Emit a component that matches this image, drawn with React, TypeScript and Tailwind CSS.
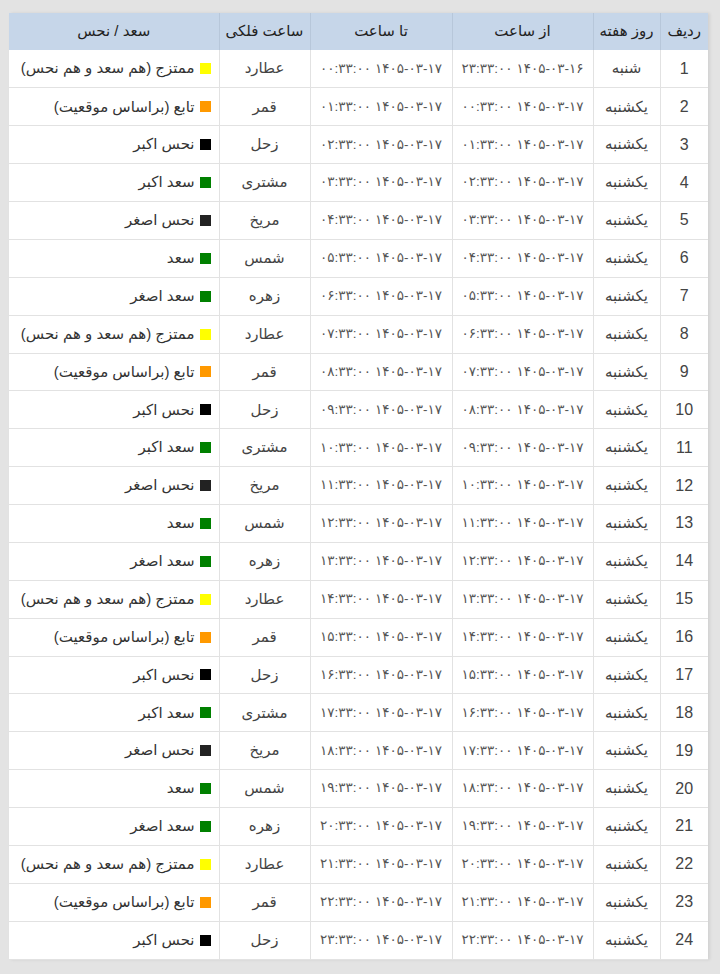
const toFa = (s: string) => s.replace(/[0-9]/g, (d) => "۰۱۲۳۴۵۶۷۸۹"[Number(d)]);

const planets = ["عطارد", "قمر", "زحل", "مشتری", "مریخ", "شمس", "زهره"];

const status: Record<string, { label: string; color: string }> = {
  عطارد: { label: "ممتزج (هم سعد و هم نحس)", color: "bg-[#ffff00]" },
  قمر: { label: "تابع (براساس موقعیت)", color: "bg-[#ff9900]" },
  زحل: { label: "نحس اکبر", color: "bg-[#000000]" },
  مشتری: { label: "سعد اکبر", color: "bg-[#008000]" },
  مریخ: { label: "نحس اصغر", color: "bg-[#222222]" },
  شمس: { label: "سعد", color: "bg-[#008000]" },
  زهره: { label: "سعد اصغر", color: "bg-[#008000]" },
};

const pad = (n: number) => String(n).padStart(2, "0");

const rows = Array.from({ length: 24 }, (_, i) => {
  const from = i === 0 ? "1405-03-16 23:33:00" : `1405-03-17 ${pad(i - 1)}:33:00`;
  const to = `1405-03-17 ${pad(i)}:33:00`;
  return {
    n: i + 1,
    day: i === 0 ? "شنبه" : "یکشنبه",
    from: toFa(from),
    to: toFa(to),
    planet: planets[i % 7],
  };
});

export default function App() {
  return (
    <main
      className="bg-[#e3e3e3] min-h-[974px] pt-[13px] pl-[9px]"
      style={{ fontFamily: '"Liberation Sans", "DejaVu Sans", sans-serif' }}
    >
      <table
        dir="rtl"
        className="w-[699px] table-fixed border-collapse bg-white text-[15px] text-[#333] shadow-[2px_0_3px_rgba(0,0,0,0.08)]"
      >
        <colgroup>
          <col className="w-[48px]" />
          <col className="w-[67px]" />
          <col className="w-[141px]" />
          <col className="w-[142px]" />
          <col className="w-[91px]" />
          <col className="w-[210px]" />
        </colgroup>
        <thead>
          <tr className="h-[37px] bg-[#c6d6e9] text-[15px] text-[#222] whitespace-nowrap">
            <th className="border-l border-[#b7c7da] font-normal">ردیف</th>
            <th className="border-l border-[#b7c7da] font-normal">روز هفته</th>
            <th className="border-l border-[#b7c7da] font-normal">از ساعت</th>
            <th className="border-l border-[#b7c7da] font-normal">تا ساعت</th>
            <th className="border-l border-[#b7c7da] font-normal">ساعت فلکی</th>
            <th className="font-normal">سعد / نحس</th>
          </tr>
        </thead>
        <tbody>
          {rows.map((r) => {
            const s = status[r.planet];
            return (
              <tr key={r.n} className="h-[37.875px] border-b border-[#e2e2e2]">
                <td className="border-l border-[#e2e2e2] text-center text-[16px] text-[#444]">{r.n}</td>
                <td className="border-l border-[#e2e2e2] text-center text-[#444]">{r.day}</td>
                <td className="border-l border-[#e2e2e2] text-center text-[13.5px] text-[#555] whitespace-nowrap">{r.from}</td>
                <td className="border-l border-[#e2e2e2] text-center text-[13.5px] text-[#555] whitespace-nowrap">{r.to}</td>
                <td className="border-l border-[#e2e2e2] text-center text-[#444]">{r.planet}</td>
                <td className="pr-[8px] text-[#333]">
                  <div className="flex items-center gap-[5px] whitespace-nowrap">
                    <span className={`inline-block w-[11px] h-[11px] shrink-0 ${s.color}`} />
                    <span>{s.label}</span>
                  </div>
                </td>
              </tr>
            );
          })}
        </tbody>
      </table>
    </main>
  );
}
